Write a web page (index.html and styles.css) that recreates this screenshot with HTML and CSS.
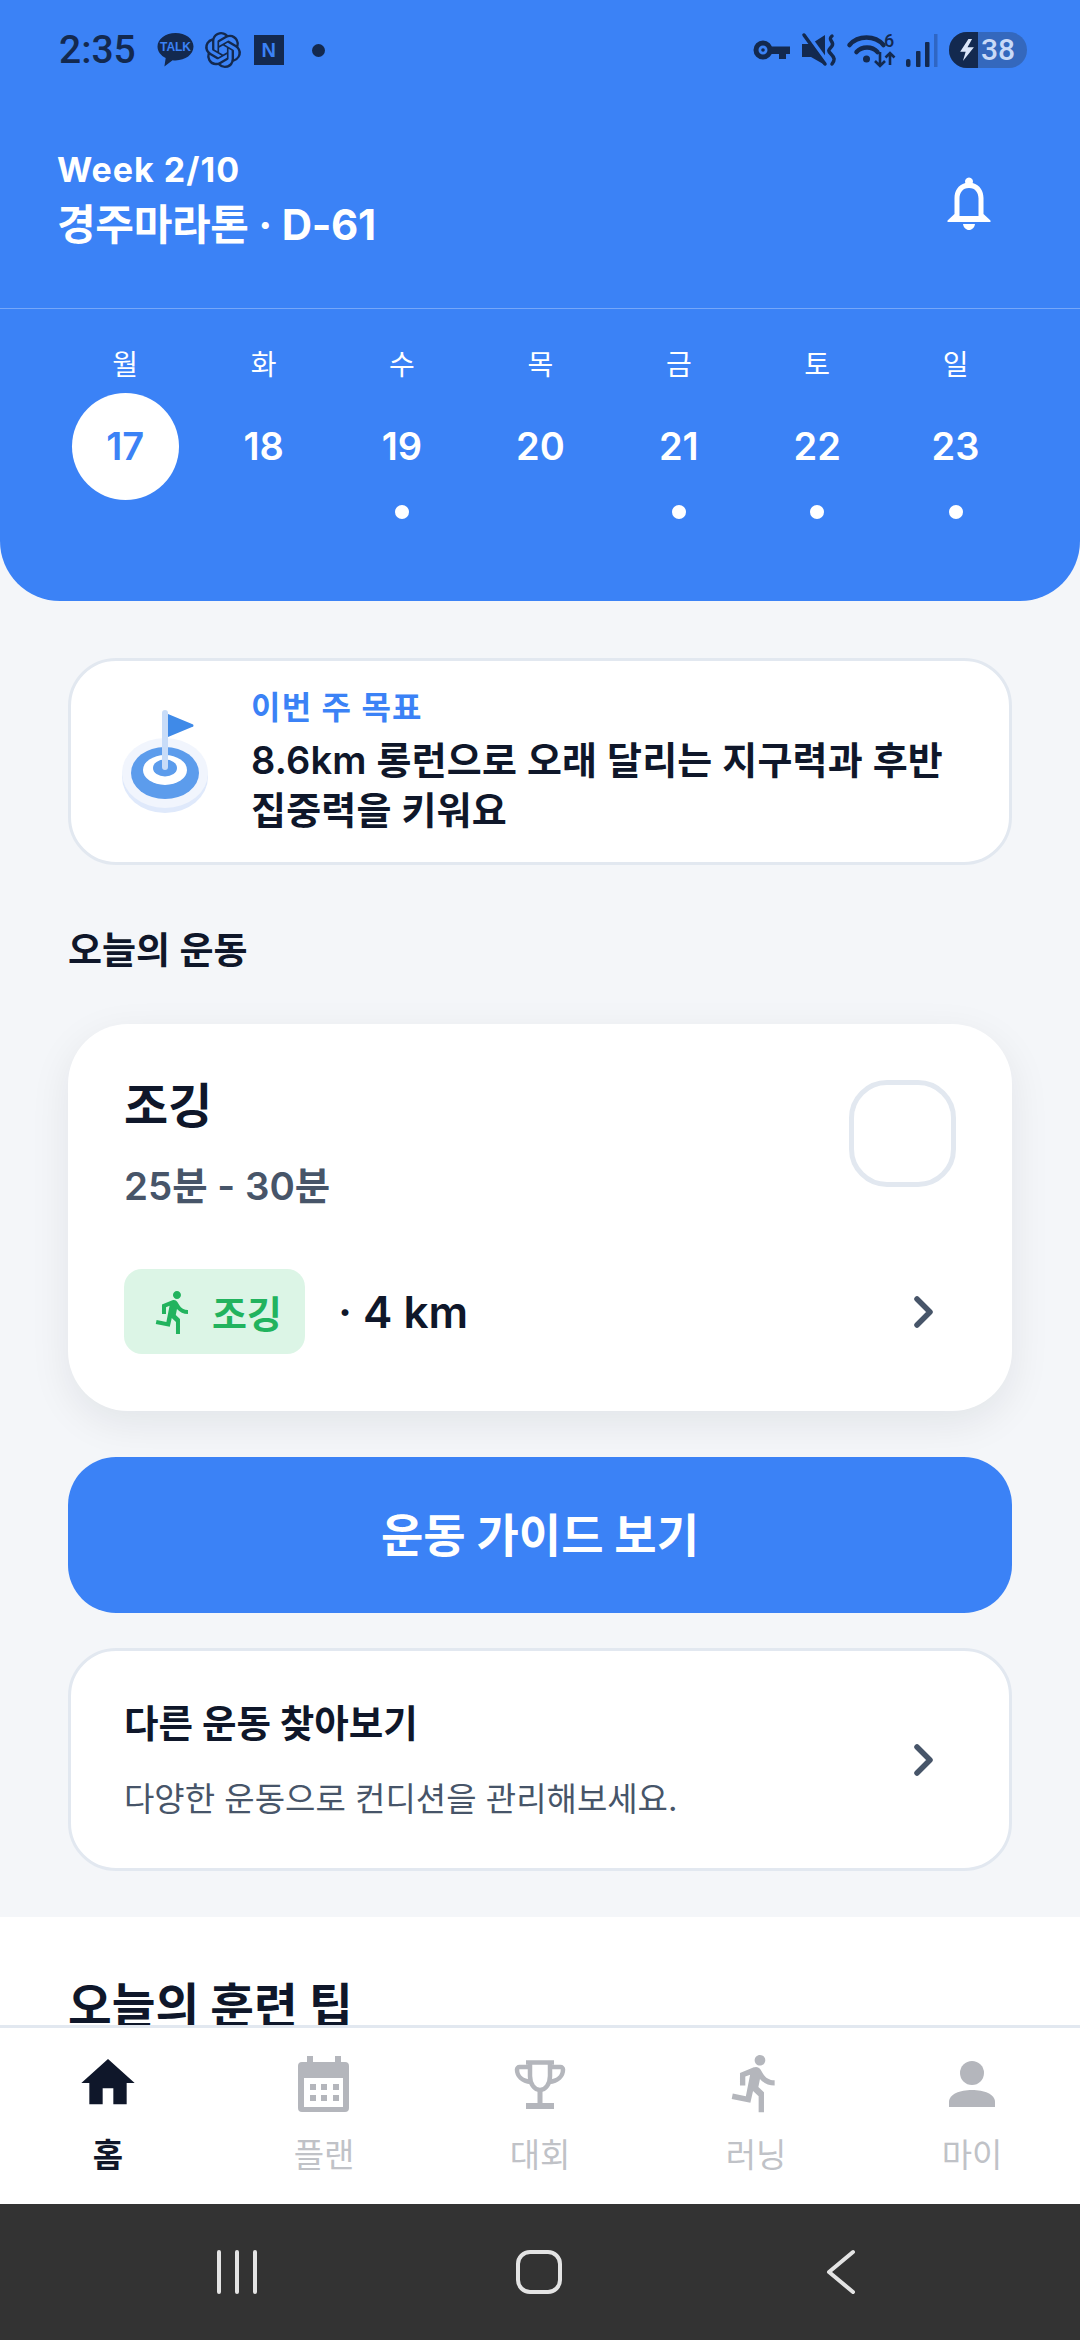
FILE: index.html
```html
<!DOCTYPE html>
<html lang="ko">
<head>
    <meta charset="UTF-8">
    <meta name="viewport" content="width=device-width, initial-scale=1.0">
    <title>홈</title>
    <link rel="stylesheet" href="styles.css">
</head>
<body>
<div class="app">
    <header class="header">
        <div class="status-bar">
            <div class="status-left">
                <span class="clock">2:35</span>
                <svg class="ic-talk" viewBox="0 0 37 36">
                    <path d="M18.5 1C8.6 1 .5 7 .5 14.6c0 4.9 3.3 9.1 8.2 11.5L7.4 34.5l8.2-6.2c1 .1 1.9.2 2.9.2 9.9 0 18-6.1 18-13.9S28.400 1 18.500 1z" fill="#13294f"/>
                    <text x="18.500" y="19" class="talk-text">TALK</text>
                </svg>
                <svg class="ic-knot" viewBox="0 0 24 24">
                    <path fill="#13294f" d="M22.2819 9.8211a5.9847 5.9847 0 0 0-.5157-4.9108 6.0462 6.0462 0 0 0-6.5098-2.9A6.0651 6.0651 0 0 0 4.9807 4.1818a5.9847 5.9847 0 0 0-3.9977 2.9 6.0462 6.0462 0 0 0 .7427 7.0966 5.98 5.98 0 0 0 .511 4.9107 6.051 6.051 0 0 0 6.5146 2.9001A5.9847 5.9847 0 0 0 13.2599 24a6.0557 6.0557 0 0 0 5.7718-4.2058 5.9894 5.9894 0 0 0 3.9977-2.9001 6.0557 6.0557 0 0 0-.7475-7.0729zm-9.022 12.6081a4.4755 4.4755 0 0 1-2.8764-1.0408l.1419-.0804 4.7783-2.7582a.7948.7948 0 0 0 .3927-.6813v-6.7369l2.02 1.1686a.071.071 0 0 1 .038.052v5.5826a4.504 4.504 0 0 1-4.4945 4.4944zm-9.6607-4.1254a4.4708 4.4708 0 0 1-.5346-3.0137l.142.0852 4.783 2.7582a.7712.7712 0 0 0 .7806 0l5.8428-3.3685v2.3324a.0804.0804 0 0 1-.0332.0615L9.74 19.9502a4.4992 4.4992 0 0 1-6.1408-1.6464zM2.3408 7.8956a4.485 4.485 0 0 1 2.3655-1.9728V11.6a.7664.7664 0 0 0 .3879.6765l5.8144 3.3543-2.0201 1.1685a.0757.0757 0 0 1-.071 0l-4.8303-2.7865A4.504 4.504 0 0 1 2.3408 7.872zm16.5963 3.8558L13.1038 8.364 15.1192 7.2a.0757.0757 0 0 1 .071 0l4.8303 2.7913a4.4944 4.4944 0 0 1-.6765 8.1042v-5.6772a.79.79 0 0 0-.407-.667zm2.0107-3.0231l-.142-.0852-4.7735-2.7818a.7759.7759 0 0 0-.7854 0L9.409 9.2297V6.8974a.0662.0662 0 0 1 .0284-.0615l4.8303-2.7866a4.4992 4.4992 0 0 1 6.6802 4.66zM8.3065 12.863l-2.02-1.1638a.0804.0804 0 0 1-.038-.0567V6.0742a4.4992 4.4992 0 0 1 7.3757-3.4537l-.142.0805L8.704 5.459a.7948.7948 0 0 0-.3927.6813zm1.0976-2.3654l2.602-1.4998 2.6069 1.4998v2.9994l-2.5974 1.4997-2.6067-1.4997Z"/>
                </svg>
                <span class="naver">N</span>
                <span class="status-dot"></span>
            </div>
            <div class="status-right">
                <svg class="ic-key" viewBox="0 0 37 20">
                    <circle cx="10" cy="10" r="7" fill="none" stroke="#13294f" stroke-width="5"/>
                    <circle cx="10" cy="10" r="1.800" fill="#13294f"/>
                    <path d="M17 6.500h20v7.500h-4v5h-7v-5h-9z" fill="#13294f"/>
                </svg>
                <svg class="ic-mute" viewBox="0 0 35 32">
                    <path d="M0 10h9L23 1v30L9 23H0z" fill="#13294f"/>
                    <path d="M5 0l21 29" stroke="#3b82f6" stroke-width="4"/>
                    <path d="M2 1l21 29" stroke="#13294f" stroke-width="3.500" stroke-linecap="round"/>
                    <path d="M30 2c-5 4 3 6 0 10s-5 4-1 8 4 6 1 10" fill="none" stroke="#13294f" stroke-width="3.500" stroke-linecap="round"/>
                </svg>
                <svg class="ic-wifi" viewBox="0 0 48 33">
                    <path d="M2.500 11C11 1 28 1 36.500 11M9.500 18C15 12 25 12 30.500 18" fill="none" stroke="#13294f" stroke-width="4.500" stroke-linecap="round"/>
                    <circle cx="19.500" cy="25" r="3.500" fill="#13294f"/>
                    <text x="42" y="13" class="wifi-num">6</text>
                    <path d="M33 18v14M28 27l5 5 5-5M43 31V19M38.500 23.500l4.500-4.500 4.500 4.500" fill="none" stroke="#13294f" stroke-width="2.600"/>
                </svg>
                <svg class="ic-signal" viewBox="0 0 32 33">
                    <rect x="0" y="25" width="4.500" height="8" rx="2" fill="#13294f"/>
                    <rect x="10" y="17" width="4.500" height="16" rx="1" fill="#13294f"/>
                    <rect x="19" y="8" width="4.500" height="25" rx="1" fill="#13294f"/>
                    <rect x="28" y="0" width="3.500" height="33" fill="#13294f" opacity=".3"/>
                </svg>
                <div class="battery">
                    <span class="battery-bolt">
                        <svg class="ic-bolt" viewBox="0 0 16 24"><path d="M9 0L0 14h6l-3 10 12-15H8l5-9z" fill="#dbe6fa"/></svg>
                    </span>
                    <span class="battery-num">38</span>
                </div>
            </div>
        </div>

        <div class="header-top">
            <div>
                <div class="week">Week 2/10</div>
                <div class="race">경주마라톤 · D-61</div>
            </div>
            <svg class="ic-bell" viewBox="0 0 46 54">
                <path d="M23 1.500a4 4 0 0 0-3.700 5.500C12 9 8.500 15 8.500 22v16l-7 6.500v1.500h43v-1.500l-7-6.500V22C37.500 15 34 9 26.700 7A4 4 0 0 0 23 1.500zM23 12c6.500 0 9.500 5 9.500 10.500V40h-19V22.500C13.500 17 16.500 12 23 12z" fill="#fff"/>
                <path d="M17 48h12c-.500 3.500-3 6-6 6s-5.500-2.500-6-6z" fill="#fff"/>
            </svg>
        </div>

        <div class="days">
            <div class="day"><span class="day-name">월</span><span class="day-num active">17</span></div>
            <div class="day"><span class="day-name">화</span><span class="day-num">18</span></div>
            <div class="day"><span class="day-name">수</span><span class="day-num">19</span><span class="day-dot"></span></div>
            <div class="day"><span class="day-name">목</span><span class="day-num">20</span></div>
            <div class="day"><span class="day-name">금</span><span class="day-num">21</span><span class="day-dot"></span></div>
            <div class="day"><span class="day-name">토</span><span class="day-num">22</span><span class="day-dot"></span></div>
            <div class="day"><span class="day-name">일</span><span class="day-num">23</span><span class="day-dot"></span></div>
        </div>
    </header>

    <main class="main">
        <div class="content">
            <section class="goal-card">
                <svg class="ic-goal" viewBox="0 0 88 108">
                    <ellipse cx="44" cy="69" rx="43" ry="36" fill="#dfe9fb"/>
                    <ellipse cx="44" cy="65" rx="43" ry="35" fill="#f1f5fd"/>
                    <ellipse cx="44" cy="65" rx="34" ry="26" fill="#5c9cec"/>
                    <ellipse cx="44" cy="62" rx="22" ry="15" fill="#fff"/>
                    <ellipse cx="44" cy="60" rx="12" ry="8.500" fill="#5c9cec"/>
                    <rect x="41" y="2" width="6" height="60" rx="3" fill="#c8dcf8"/>
                    <path d="M47 6l24 10a1.500 1.500 0 0 1 0 3L47 29z" fill="#3f8ae8"/>
                </svg>
                <div>
                    <div class="goal-label">이번 주 목표</div>
                    <p class="goal-text">8.6km 롱런으로 오래 달리는 지구력과 후반 집중력을 키워요</p>
                </div>
            </section>

            <h2 class="section-title">오늘의 운동</h2>

            <section class="workout-card">
                <div class="workout-top">
                    <div>
                        <h3 class="workout-name">조깅</h3>
                        <div class="workout-time">25분 - 30분</div>
                    </div>
                    <span class="check-box"></span>
                </div>
                <div class="workout-bottom">
                    <span class="badge">
                        <svg class="ic-badge-run" viewBox="0 0 24 24"><path d="M13.49 5.480c1.100 0 2-.9 2-2s-.9-2-2-2-2 .9-2 2 .9 2 2 2zm-3.600 13.900l1-4.400 2.100 2v6h2v-7.500l-2.100-2 .6-3c1.300 1.500 3.300 2.500 5.500 2.500v-2c-1.900 0-3.500-1-4.300-2.400l-1-1.600c-.4-.6-1-1-1.700-1-.3 0-.5.100-.8.100l-5.200 2.200v4.700h2v-3.400l1.800-.7-1.600 8.100-4.900-1-.4 2 7 1.400z" fill="#22b35e"/></svg>
                        조깅
                    </span>
                    <span class="distance">· 4 km</span>
                    <svg class="ic-chevron" viewBox="0 0 20 32"><path d="M3 3l13 13L3 29" fill="none" stroke="#475569" stroke-width="5.500" stroke-linecap="round" stroke-linejoin="round"/></svg>
                </div>
            </section>

            <button class="guide-button">운동 가이드 보기</button>

            <section class="other-card">
                <div>
                    <div class="other-title">다른 운동 찾아보기</div>
                    <div class="other-sub">다양한 운동으로 컨디션을 관리해보세요.</div>
                </div>
                <svg class="ic-chevron" viewBox="0 0 20 32"><path d="M3 3l13 13L3 29" fill="none" stroke="#475569" stroke-width="5.500" stroke-linecap="round" stroke-linejoin="round"/></svg>
            </section>
        </div>

        <section class="tips">
            <h2 class="tips-title">오늘의 훈련 팁</h2>
        </section>
    </main>

    <nav class="tab-bar">
        <div class="tab active">
            <svg class="tab-icon" viewBox="0 0 24 24"><path d="M10 20v-6h4v6h5v-8h3L12 3 2 12h3v8z" fill="#0f172a"/></svg>
            <span>홈</span>
        </div>
        <div class="tab">
            <svg class="tab-icon" viewBox="0 0 64 64">
                <path d="M15 5h6v6h22V5h6v6h4a4 4 0 0 1 4 4v42a4 4 0 0 1-4 4H10a4 4 0 0 1-4-4V15a4 4 0 0 1 4-4h5z" fill="#b4b6bc"/>
                <path d="M12 27h39v29H12z" fill="#fff"/>
                <path d="M18 33h6v6h-6zM29 33h6v6h-6zM41 33h6v6h-6zM18 44h6v6h-6zM29 44h6v6h-6zM41 44h6v6h-6z" fill="#b4b6bc"/>
            </svg>
            <span>플랜</span>
        </div>
        <div class="tab">
            <svg class="tab-icon" viewBox="0 0 64 64">
                <path d="M18 11.500h28M22 11v14c0 8 4.500 14 10 14s10-6 10-14V11" fill="none" stroke="#b4b6bc" stroke-width="4.500"/>
                <path d="M22 16H11.500A2.500 2.500 0 0 0 9 18.500C9 25 14 30 23 31M42 16h10.500a2.500 2.500 0 0 1 2.500 2.500C55 25 50 30 41 31" fill="none" stroke="#b4b6bc" stroke-width="4.500"/>
                <path d="M29.500 39h5v13h-5zM18 52h28v6H18z" fill="#b4b6bc"/>
            </svg>
            <span>대회</span>
        </div>
        <div class="tab">
            <svg class="tab-icon" viewBox="0 0 24 24"><path d="M13.49 5.480c1.100 0 2-.9 2-2s-.9-2-2-2-2 .9-2 2 .9 2 2 2zm-3.600 13.900l1-4.400 2.100 2v6h2v-7.500l-2.100-2 .6-3c1.300 1.500 3.300 2.500 5.500 2.500v-2c-1.900 0-3.500-1-4.300-2.400l-1-1.600c-.4-.6-1-1-1.700-1-.3 0-.5.100-.8.100l-5.200 2.200v4.700h2v-3.400l1.800-.7-1.600 8.100-4.900-1-.4 2 7 1.400z" fill="#b4b6bc"/></svg>
            <span>러닝</span>
        </div>
        <div class="tab">
            <svg class="tab-icon" viewBox="0 0 64 64">
                <circle cx="32" cy="22" r="12" fill="#b4b6bc"/>
                <path d="M9 56v-5c0-8 11-12 23-12s23 4 23 12v5z" fill="#b4b6bc"/>
            </svg>
            <span>마이</span>
        </div>
    </nav>

    <div class="system-nav">
        <svg class="sys-recent" viewBox="0 0 42 44"><path d="M3 2v40M21 2v40M39 2v40" stroke="#e4e4e4" stroke-width="4" stroke-linecap="round"/></svg>
        <span class="sys-home"></span>
        <svg class="sys-back" viewBox="0 0 30 46"><path d="M27 3L3 23l24 20" fill="none" stroke="#e4e4e4" stroke-width="4" stroke-linecap="round" stroke-linejoin="round"/></svg>
    </div>
</div>
</body>
</html>
```

FILE: styles.css
```css
* {
    box-sizing: border-box;
}
body {
    margin: 0;
    font-family: Inter, "Noto Sans CJK KR", sans-serif;
    background-color: #f4f6f9;
    color: #0f172a;
}
svg {
    overflow: visible;
}
.app {
    width: 1080px;
    height: 2340px;
    display: flex;
    flex-direction: column;
    overflow: hidden;
}

/* header */
.header {
    background: #3b82f6;
    color: white;
    height: 601px;
    flex: none;
    border-radius: 0 0 60px 60px;
}
.status-bar {
    height: 100px;
    display: flex;
    align-items: center;
    justify-content: space-between;
    padding: 0 53px 0 59px;
}
.status-left, .status-right {
    display: flex;
    align-items: center;
}
.clock {
    font-family: Roboto, sans-serif;
    font-size: 39px;
    font-weight: 500;
    color: #13294f;
    line-height: 40px;
}
.ic-talk {
    width: 37px;
    height: 36px;
    margin-left: 21px;
}
.talk-text {
    font-family: "Liberation Sans", sans-serif;
    font-size: 12px;
    font-weight: 700;
    fill: #3b82f6;
    text-anchor: middle;
}
.ic-knot {
    width: 36px;
    height: 36px;
    margin-left: 11px;
}
.naver {
    width: 30px;
    height: 30px;
    margin-left: 13px;
    background: #13294f;
    color: #3b82f6;
    font-family: "Liberation Sans", sans-serif;
    font-size: 20px;
    font-weight: 700;
    line-height: 30px;
    text-align: center;
}
.status-dot {
    width: 13px;
    height: 13px;
    margin-left: 28px;
    border-radius: 50%;
    background: #13294f;
}
.ic-key {
    width: 37px;
    height: 20px;
}
.ic-mute {
    width: 35px;
    height: 32px;
    margin-left: 12px;
}
.ic-wifi {
    width: 48px;
    height: 33px;
    margin-left: 10px;
}
.wifi-num {
    font-family: Roboto, sans-serif;
    font-size: 18px;
    font-weight: 500;
    fill: #13294f;
    text-anchor: middle;
}
.ic-signal {
    width: 32px;
    height: 33px;
    margin-left: 11px;
}
.battery {
    width: 78px;
    height: 36px;
    margin-left: 11px;
    border-radius: 18px;
    overflow: hidden;
    display: flex;
    background: #3468bd;
}
.battery-bolt {
    width: 29px;
    background: #13294f;
    display: flex;
    align-items: center;
    justify-content: flex-end;
    padding-right: 3px;
}
.ic-bolt {
    width: 15px;
    height: 22px;
}
.battery-num {
    flex: 1;
    font-family: Roboto, sans-serif;
    font-size: 30px;
    font-weight: 500;
    line-height: 36px;
    color: #c9daf7;
    padding-left: 3px;
}
.header-top {
    height: 209px;
    padding: 48px 57px 0 57px;
    display: flex;
    justify-content: space-between;
    align-items: flex-start;
    border-bottom: 1px solid rgba(255, 255, 255, 0.3);
}
.week {
    font-size: 34px;
    font-weight: 700;
    line-height: 44px;
    letter-spacing: 1px;
}
.race {
    font-size: 42px;
    font-weight: 700;
    line-height: 56px;
    margin-top: 5px;
    letter-spacing: -0.3px;
}
.ic-bell {
    width: 46px;
    height: 54px;
    margin: 28px 31px 0 0;
}
.days {
    display: grid;
    grid-template-columns: repeat(7, 138.4px);
    padding: 36px 0 0 56px;
}
.day {
    display: flex;
    flex-direction: column;
    align-items: center;
}
.day-name {
    font-size: 28px;
    line-height: 40px;
}
.day-num {
    width: 107px;
    height: 107px;
    margin-top: 8px;
    border-radius: 50%;
    font-size: 38px;
    font-weight: 600;
    line-height: 107px;
    text-align: center;
}
.day-num.active {
    background: white;
    color: #3b82f6;
}
.day-dot {
    width: 14px;
    height: 14px;
    margin-top: 5px;
    border-radius: 50%;
    background: white;
}

/* main scroll area */
.main {
    flex: 1;
    min-height: 0;
    overflow: hidden;
}
.content {
    padding: 57px 68px 0;
}
.goal-card {
    height: 207px;
    background: white;
    border: 3px solid #e2e8f0;
    border-radius: 48px;
    display: flex;
    align-items: center;
    padding-left: 50px;
}
.ic-goal {
    width: 88px;
    height: 108px;
    flex: none;
    margin-right: 42px;
}
.goal-label {
    font-size: 32px;
    font-weight: 600;
    line-height: 44px;
    color: #3b82f6;
    letter-spacing: 1.2px;
    margin-top: -3px;
}
.goal-text {
    margin: 5px 0 0;
    font-size: 38px;
    font-weight: 600;
    line-height: 50px;
    letter-spacing: 0.2px;
    max-width: 700px;
}
.section-title {
    margin: 61px 0 48px;
    font-size: 37px;
    font-weight: 600;
    line-height: 50px;
}
.workout-card {
    height: 387px;
    background: white;
    border-radius: 60px;
    box-shadow: 0 12px 40px rgba(15, 23, 42, 0.08);
    padding: 56px 56px 0;
}
.workout-top {
    display: flex;
    justify-content: space-between;
    align-items: flex-start;
}
.workout-name {
    margin: 0;
    font-size: 48px;
    font-weight: 700;
    line-height: 52px;
}
.workout-time {
    margin-top: 30px;
    font-size: 38.5px;
    font-weight: 600;
    line-height: 48px;
    color: #475569;
}
.check-box {
    width: 107px;
    height: 107px;
    border: 5px solid #e2e8f0;
    border-radius: 38px;
}
.workout-bottom {
    display: flex;
    align-items: center;
    margin-top: 59px;
}
.badge {
    width: 181px;
    height: 85px;
    background: #dcf5e6;
    border-radius: 18px;
    display: flex;
    align-items: center;
    padding-left: 26px;
    font-size: 38px;
    font-weight: 700;
    color: #22b35e;
}
.ic-badge-run {
    width: 48px;
    height: 48px;
    margin-right: 14px;
}
.distance {
    margin-left: 33px;
    font-size: 44px;
    font-weight: 600;
    flex: 1;
}
.ic-chevron {
    width: 20px;
    height: 32px;
    margin-right: 22px;
}
.guide-button {
    display: block;
    width: 100%;
    height: 156px;
    margin-top: 46px;
    padding-bottom: 8px;
    border: none;
    border-radius: 48px;
    background-color: #3b82f6;
    color: white;
    font-family: inherit;
    font-size: 46px;
    font-weight: 700;
}
.other-card {
    height: 223px;
    margin-top: 35px;
    background: white;
    border: 3px solid #e2e8f0;
    border-radius: 48px;
    padding-left: 53px;
    display: flex;
    align-items: center;
    justify-content: space-between;
}
.other-card .ic-chevron {
    margin-right: 75px;
}
.other-title {
    font-size: 37.5px;
    font-weight: 700;
    line-height: 52px;
}
.other-sub {
    margin-top: 26px;
    font-size: 33px;
    line-height: 46px;
    color: #475569;
}
.tips {
    margin-top: 46px;
    padding: 59px 68px 0;
    background: white;
    height: 200px;
}
.tips-title {
    margin: 0;
    font-size: 47.5px;
    font-weight: 700;
    line-height: 60px;
}

/* bottom tabs */
.tab-bar {
    height: 179px;
    flex: none;
    background: white;
    border-top: 3px solid #e2e8f0;
    display: grid;
    grid-template-columns: repeat(5, 216px);
    padding-top: 23px;
}
.tab {
    display: flex;
    flex-direction: column;
    align-items: center;
    font-size: 33px;
    line-height: 46px;
    color: #c0c2c7;
}
.tab.active {
    color: #0f172a;
    font-weight: 600;
}
.tab-icon {
    width: 64px;
    height: 64px;
    margin-bottom: 17px;
}
.system-nav {
    height: 136px;
    flex: none;
    background: #333333;
    display: flex;
    align-items: center;
}
.sys-recent {
    width: 42px;
    height: 44px;
    margin-left: 216px;
}
.sys-home {
    width: 46px;
    height: 44px;
    margin-left: 258px;
    border: 4px solid #e4e4e4;
    border-radius: 14px;
}
.sys-back {
    width: 30px;
    height: 46px;
    margin-left: 264px;
}
```
